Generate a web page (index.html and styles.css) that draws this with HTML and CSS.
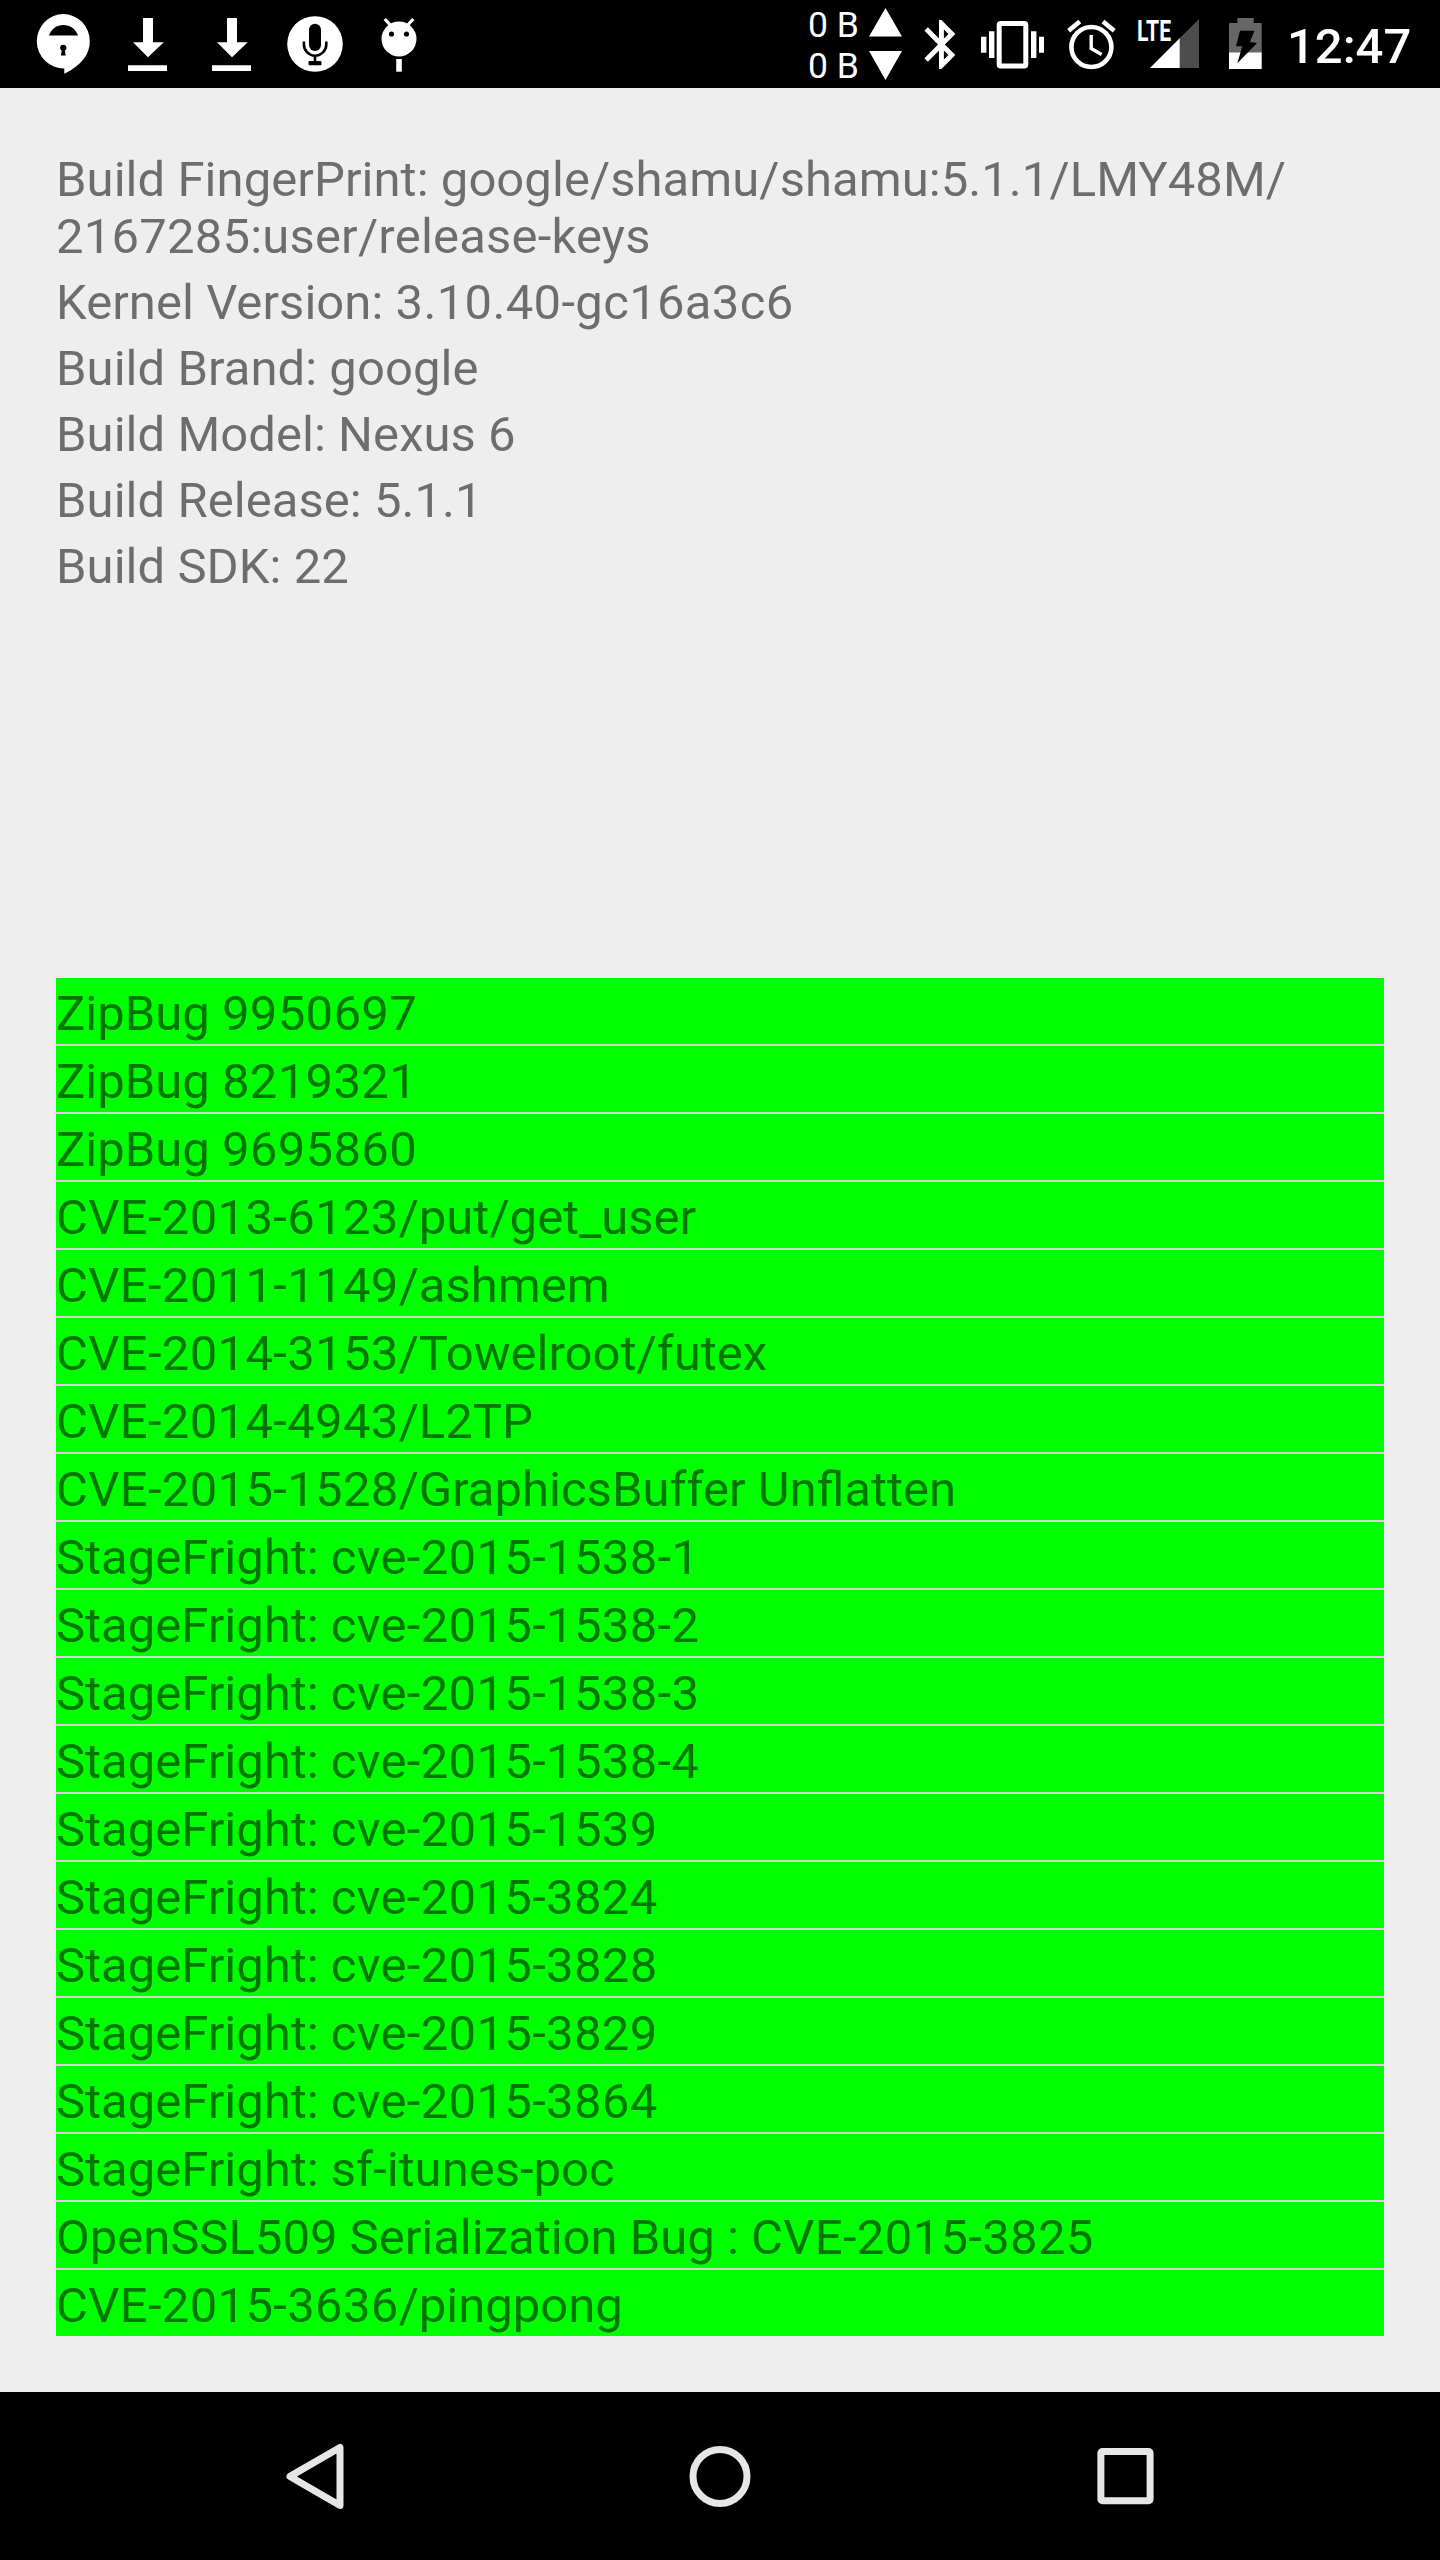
FILE: index.html
```html
<!DOCTYPE html>
<html lang="en">
<head>
<meta charset="utf-8">
<title>Device vulnerability scan</title>
<link rel="stylesheet" href="styles.css">
</head>
<body>
<div class="screen">
  <header class="status-bar">
    <div class="notifications">
      <svg class="notice" viewBox="21 0 84 88"><path fill="#fff" d="M63.3 14A26.6 27.2 0 0 1 89.8 41.5C89.8 54 82 65 64.3 73.8V68.4A27 27.2 0 1 1 63.3 14Z"/><path d="M49 35.6C51 29 57 25 63.4 25S76 29 78 35.6ZM63.3 44.7a3.2 3.2 0 0 1 1.6 6l.8 4.8h-4.8l.8-4.8a3.2 3.2 0 0 1 1.6-6Z"/></svg>
      <svg class="notice" viewBox="105 0 84 88"><path fill="#fff" d="M143 18h10v24.3h10.8L148 57.2 133 42.3h10ZM128 65.3h39v5.6h-39Z"/></svg>
      <svg class="notice" viewBox="105 0 84 88"><path fill="#fff" d="M143 18h10v24.3h10.8L148 57.2 133 42.3h10ZM128 65.3h39v5.6h-39Z"/></svg>
      <svg class="notice" viewBox="273 0 84 88"><circle cx="315" cy="44" r="27.8" fill="#fff"/><rect x="309" y="23.7" width="12" height="27.3" rx="6"/><path fill="none" stroke="#000" stroke-width="2.6" d="M303.9 41.5v3a11.2 11.2 0 0 0 22.4 0v-3M315 55.5v7"/><rect x="308.5" y="61" width="13" height="4.3" rx="1"/></svg>
      <svg class="notice" viewBox="357 0 84 88"><circle cx="399" cy="39" r="17.5" fill="#fff"/><path stroke="#fff" stroke-width="3.2" d="M384.7 19l6 6.5M413.3 19l-6 6.5"/><circle cx="391.5" cy="34" r="2.6"/><circle cx="406.5" cy="34" r="2.6"/><path fill="#fff" d="M396.2 59h5.6v12.7h-5.6Z"/></svg>
    </div>
    <div class="system">
      <div class="traffic"><span>0 B</span><span>0 B</span></div>
      <svg class="arrows" viewBox="866 0 40 88"><path fill="#fff" d="M885.5 8 902 36.5H869ZM869 51h33L885.5 80Z"/></svg>
      <svg class="bluetooth" viewBox="906 0 66 88"><path fill="#fff" transform="translate(912.3 15.1) scale(2.43 2.45)" d="M17.71 7.71L12 2h-1v7.59L6.41 5 5 6.41 10.59 12 5 17.59 6.41 19 11 14.41V22h1l5.71-5.71-4.3-4.29 4.3-4.29zM13 5.83l1.88 1.88L13 9.59V5.83zm1.88 10.46L13 18.17v-3.76l1.88 1.88z"/></svg>
      <svg class="vibrate" viewBox="972 0 80 88"><rect x="999.2" y="23.4" width="26.6" height="42.6" rx="1.5" fill="none" stroke="#fff" stroke-width="5"/><path fill="#fff" d="M989 31.3h5.4v26.6H989ZM981 36.7h5.4v16H981ZM1031 31.3h5.4v26.6H1031ZM1039 36.7h5v16h-5Z"/></svg>
      <svg class="alarm" viewBox="1052 0 78 88"><g fill="none" stroke="#fff"><circle cx="1091.4" cy="47" r="20" stroke-width="4.6"/><path stroke-width="3.4" d="M1091.2 35v13.5l10.4 6"/><path stroke-width="4.6" d="M1068.6 30.7l11.2-9.3M1114.2 30.7l-11.2-9.3"/></g></svg>
      <svg class="signal" viewBox="1130 0 84 88"><path fill="#4d4d4d" d="M1199 19v49h-49Z"/><path fill="#fff" d="M1179.7 38.3V68H1150Z"/><text class="lte" x="1137" y="41" textLength="34" lengthAdjust="spacingAndGlyphs">LTE</text></svg>
      <svg class="battery" viewBox="1214 0 64 88"><path fill="#666" d="M1237.3 18h16.4v5h8v30H1229V23h8.3Z"/><path fill="#fff" d="M1229 52.4h32.7v16.5H1229Z"/><path d="M1240 30.7h14.3L1250 42l7 1-19.7 20.3 5-17H1236Z"/></svg>
      <time class="clock">12:47</time>
    </div>
  </header>

  <main class="content">
    <section class="device">
      <p>Build FingerPrint: google/shamu/shamu:5.1.1/LMY48M/<br><span class="build">2167285:user/release-keys</span></p>
      <p>Kernel Version: <span class="id">3.10.40-gc16a3c6</span></p>
      <p>Build Brand: google</p>
      <p>Build Model: Nexus 6</p>
      <p>Build Release: 5.1.1</p>
      <p>Build SDK: 22</p>
    </section>
    <ul class="results">
      <li>ZipBug <span class="id">9950697</span></li>
      <li>ZipBug <span class="id">8219321</span></li>
      <li>ZipBug <span class="id">9695860</span></li>
      <li><span class="id">CVE-2013-6123</span>/put/get_user</li>
      <li><span class="id">CVE-2011-1149</span>/ashmem</li>
      <li><span class="id">CVE-2014-3153</span>/Towelroot/futex</li>
      <li><span class="id">CVE-2014-4943</span>/L2TP</li>
      <li><span class="id">CVE-2015-1528</span>/GraphicsBuffer Unflatten</li>
      <li>StageFright: <span class="id">cve-2015-1538-1</span></li>
      <li>StageFright: <span class="id">cve-2015-1538-2</span></li>
      <li>StageFright: <span class="id">cve-2015-1538-3</span></li>
      <li>StageFright: <span class="id">cve-2015-1538-4</span></li>
      <li>StageFright: <span class="id">cve-2015-1539</span></li>
      <li>StageFright: <span class="id">cve-2015-3824</span></li>
      <li>StageFright: <span class="id">cve-2015-3828</span></li>
      <li>StageFright: <span class="id">cve-2015-3829</span></li>
      <li>StageFright: <span class="id">cve-2015-3864</span></li>
      <li>StageFright: sf-itunes-poc</li>
      <li>OpenSSL509 Serialization Bug : <span class="id">CVE-2015-3825</span></li>
      <li><span class="id">CVE-2015-3636</span>/pingpong</li>
    </ul>
  </main>

  <nav class="nav-bar">
    <svg class="nav-icon" viewBox="0 0 100 100"><path d="M76 21.500V79.500L26 50.400Z"/></svg>
    <svg class="nav-icon" viewBox="0 0 100 100"><circle cx="50" cy="50.400" r="27"/></svg>
    <svg class="nav-icon" viewBox="0 0 100 100"><rect x="24.900" y="25.500" width="49.200" height="49.200" rx="1.500"/></svg>
  </nav>
</div>
</body>
</html>
```
FILE: styles.css
```css
* { box-sizing: border-box; }
body { margin: 0; font-family: Roboto, sans-serif; background: #eee; }
.screen { width: 1440px; height: 2560px; display: flex; flex-direction: column; overflow: hidden; }

.status-bar { height: 88px; flex: none; display: flex; justify-content: space-between; background: #000; color: #fff; padding: 0 29px 0 21px; }
.status-bar svg { display: block; height: 88px; flex: none; }
.notifications, .system { display: flex; }
.notice { width: 84px; }
.traffic { display: flex; flex-direction: column; width: 58px; padding-top: 5px; font-size: 35.5px; line-height: 41px; white-space: nowrap; }
.arrows { width: 40px; }
.bluetooth { width: 66px; }
.vibrate { width: 80px; }
.alarm { width: 78px; }
.signal { width: 84px; }
.battery { width: 64px; }
.lte { font-size: 29.5px; font-weight: 700; fill: #fff; }
.clock { width: 133px; padding-left: 9px; font-size: 49px; font-weight: 500; line-height: 57px; padding-top: 18px; white-space: nowrap; }

.content { flex: 1; display: flex; flex-direction: column; justify-content: space-between; padding: 56px; font-size: 49px; line-height: 57px; color: rgba(0, 0, 0, .54); }
.device p { margin: 0; padding: 7px 0 2px; white-space: nowrap; letter-spacing: .05px; }
.device .build { letter-spacing: .2px; }
.results { list-style: none; margin: 0; padding: 0; display: flex; flex-direction: column; gap: 2px; background: #d4d4d4; }
.results li { height: 66px; padding-top: 7px; background: #0f0; white-space: nowrap; }
.content .id { letter-spacing: .33px; }

.nav-bar { height: 168px; flex: none; display: flex; justify-content: center; align-items: center; gap: 306px; background: #000; }
.nav-icon { width: 100px; height: 100px; fill: none; stroke: #e6e6e6; stroke-width: 7; stroke-linejoin: round; }
```
